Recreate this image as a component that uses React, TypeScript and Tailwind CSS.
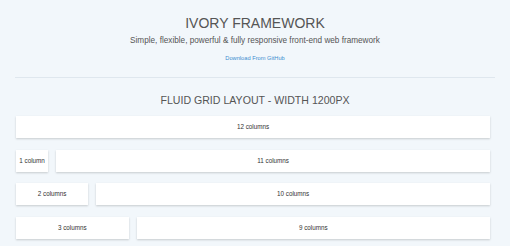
const ROWS: [number, number][] = [
  [12, 0],
  [1, 11],
  [2, 10],
  [3, 9],
];

const SPAN: Record<number, string> = {
  1: 'col-span-1',
  2: 'col-span-2',
  3: 'col-span-3',
  9: 'col-span-9',
  10: 'col-span-10',
  11: 'col-span-11',
  12: 'col-span-12',
};

function Cell({ n }: { n: number }) {
  return (
    <div
      className={`${SPAN[n]} h-[22px] bg-white flex items-center justify-center whitespace-nowrap text-[6.3px] leading-none text-[#333] shadow-[0_1px_2px_rgba(0,0,0,0.18)]`}
    >
      {n} {n === 1 ? 'column' : 'columns'}
    </div>
  );
}

export default function App() {
  return (
    <div
      className="min-h-screen w-[510px] bg-[#f2f7fb] text-[#555] overflow-hidden"
      style={{ fontFamily: '"Liberation Sans", Arial, sans-serif' }}
    >
      {/* Header */}
      <div className="flex flex-col items-center text-center pt-[15.5px]">
        <h1 className="text-[14px] leading-none font-normal text-[#555]">IVORY FRAMEWORK</h1>
        <p className="mt-[7px] text-[8.2px] leading-none text-[#555]">
          Simple, flexible, powerful &amp; fully responsive front-end web framework
        </p>
        <a className="mt-[11.6px] text-[5.7px] leading-none text-[#3c8dd0]" href="#">
          Download From GitHub
        </a>
      </div>

      <div className="mx-[15px] mt-[15px] h-px bg-[#dfe7ee]" />

      {/* Grid demo */}
      <h2 className="mt-[17px] text-center text-[10.6px] leading-none font-normal text-[#555]">
        FLUID GRID LAYOUT - WIDTH 1200PX
      </h2>

      <div className="ml-[16px] w-[474px] mt-[10.4px] grid grid-cols-12 gap-x-[8px] gap-y-[11.75px]">
        {ROWS.map(([a, b], i) => (
          <div key={i} className="contents">
            <Cell n={a} />
            {b > 0 && <Cell n={b} />}
          </div>
        ))}
      </div>
    </div>
  );
}
